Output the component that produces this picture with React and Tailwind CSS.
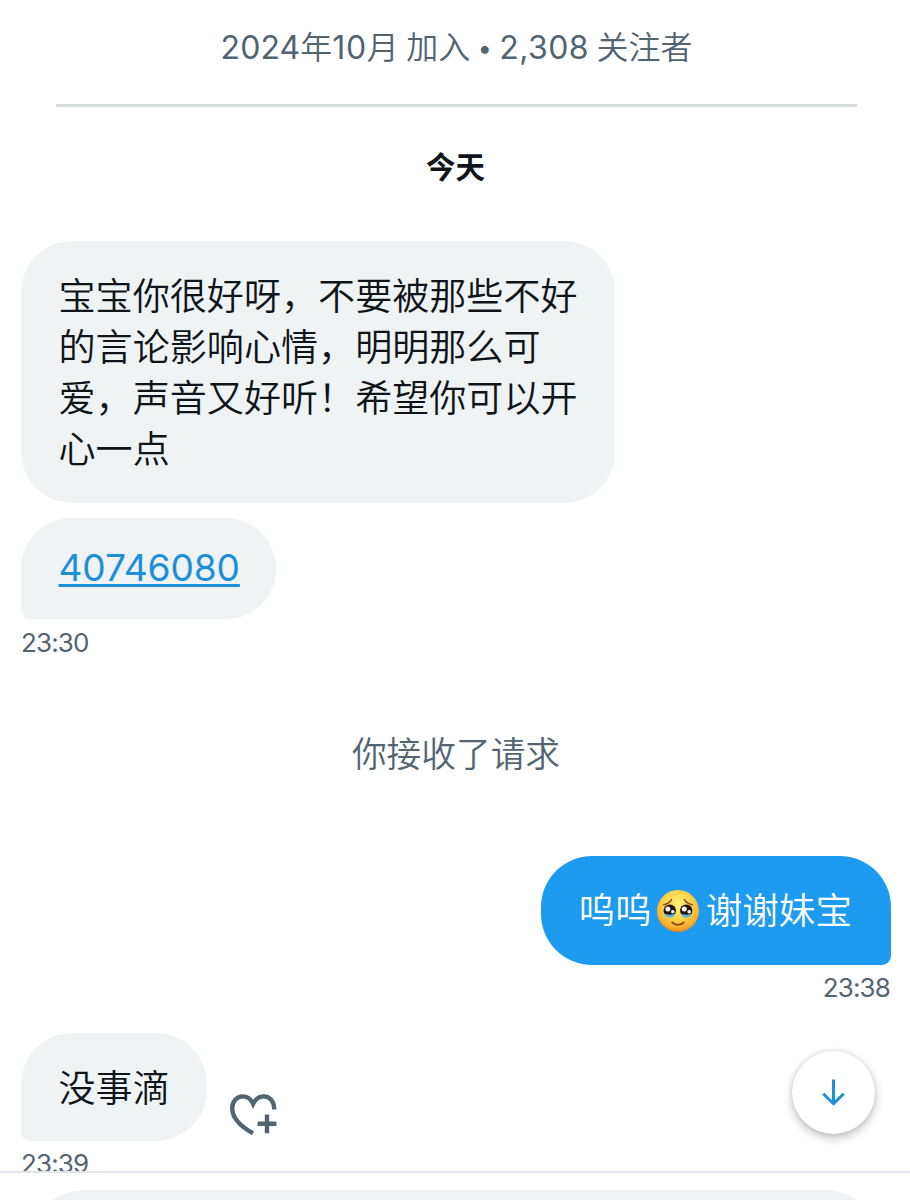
import React from "react";
import clsx from "clsx";

const messages = [
  {
    id: 1,
    lines: [
      "宝宝你很好呀，不要被那些不好",
      "的言论影响心情，明明那么可",
      "爱，声音又好听！希望你可以开",
      "心一点",
    ],
  },
  { id: 2, link: "40746080", time: "23:30" },
];

const TearyFace = () => (
  <svg viewBox="0 0 44 44" className="w-[44px] h-[44px] ml-[4px] mr-[6px] shrink-0" role="img" aria-label="🥹">
    <defs>
      <radialGradient id="face" cx="0.5" cy="0.36" r="0.66">
        <stop offset="0" stopColor="#fff07a" />
        <stop offset="0.5" stopColor="#fed54a" />
        <stop offset="0.82" stopColor="#f8ac2c" />
        <stop offset="1" stopColor="#dd7d1c" />
      </radialGradient>
    </defs>
    <circle cx="22" cy="22" r="21" fill="url(#face)" />
    <path d="M7.8 15.8C10.8 15.1 13.9 13.3 15.5 10.6" fill="none" stroke="#8a4a12" strokeWidth="1.5" strokeLinecap="round" />
    <path d="M36.2 15.8C33.2 15.1 30.1 13.3 28.5 10.6" fill="none" stroke="#8a4a12" strokeWidth="1.5" strokeLinecap="round" />
    <circle cx="13.8" cy="21.6" r="6.2" fill="#22130f" />
    <circle cx="30.2" cy="21.6" r="6.2" fill="#22130f" />
    <path d="M8.2 24.6c2.6 1.4 8.6 1.4 11.2 0-.8 2.6-3 4.1-5.6 4.1s-4.8-1.5-5.6-4.1z" fill="#58b4dd" />
    <path d="M24.6 24.6c2.6 1.4 8.6 1.4 11.2 0-.8 2.6-3 4.1-5.6 4.1s-4.8-1.5-5.6-4.1z" fill="#58b4dd" />
    <circle cx="11.9" cy="19.9" r="2.5" fill="#fff" />
    <circle cx="28.3" cy="19.9" r="2.5" fill="#fff" />
    <circle cx="16.8" cy="22.8" r="1.8" fill="#fff" />
    <circle cx="33.2" cy="22.8" r="1.8" fill="#fff" />
    <path d="M16.2 33.4c3 3.2 8.6 3.2 11.6 0" fill="none" stroke="#8a4a12" strokeWidth="1.8" strokeLinecap="round" />
  </svg>
);

const HeartPlus = () => (
  <svg viewBox="0 0 47 43" className="w-[47px] h-[43px]" fill="none" stroke="#536471" strokeWidth="4.4">
    <path d="M23 39.2C11 32.6 2.2 24 2.2 14.2 2.2 7.5 6.8 2.4 12.8 2.4c4.5 0 8 2.4 10.3 7.4 2.5-5 6-7.4 10.6-7.4 6 0 10.6 5 10.6 13.2" />
    <path d="M37 20.4v18.8M27.6 29.8h18.8" />
  </svg>
);

const Bubble = ({ tail, className, children }) => (
  <div
    className={clsx(
      "px-[37.5px] text-[37.1px] leading-[51px] whitespace-nowrap",
      tail === "left" && "rounded-[51px] rounded-bl-[9px] bg-[#eff3f4]",
      tail === "right" && "rounded-[51px] rounded-br-[9px] bg-[#1d9bf0] text-white",
      !tail && "rounded-[51px] bg-[#eff3f4]",
      className
    )}
  >
    {children}
  </div>
);

const Time = ({ className, children }) => (
  <div className={clsx("text-[26px] leading-[32px] tracking-[-0.85px] font-normal text-[#536471]", className)}>{children}</div>
);

const App = () => {
  const [first, second] = messages;

  return (
    <div className="relative flex flex-col w-[910px] h-[1200px] overflow-hidden bg-white text-[#0f1419] font-['Inter','Noto_Sans_CJK_SC',sans-serif] font-[350]">
      <main className="flex flex-col h-[1171px] shrink-0 overflow-hidden">
        <header className="ml-[56px] mr-[53px] h-[107px] shrink-0 border-b-[3px] border-[#d6dde0] pt-[24px] text-center text-[32px] leading-[48px] [word-spacing:-1.5px] text-[#536471] whitespace-nowrap">
          <span className="font-normal tracking-[0.1px]">2024</span>年<span className="font-normal tracking-[0.6px]">10</span>月 加入{" "}
          <span className="font-normal text-[25px] align-[2px]">•</span>{" "}
          <span className="font-normal tracking-[0.4px]">2,308</span> 关注者
        </header>

        <h2 className="mt-[40px] pl-[1px] h-[40px] shrink-0 text-center text-[29.5px] leading-[40px] font-bold">今天</h2>

        <section className="mt-[54px] pl-[21px] shrink-0">
          <Bubble className="w-[594px] h-[262px] pt-[30px]">
            {first.lines.map((line) => (
              <p key={line}>{line}</p>
            ))}
          </Bubble>
          <Bubble tail="left" className="mt-[15px] w-[255px] h-[101px] pt-[24px]">
            <a href="#" className="font-normal text-[#1d8fd8] underline decoration-[3px] underline-offset-[3px] tracking-[-0.1px]">
              {second.link}
            </a>
          </Bubble>
          <Time className="mt-[8px]">{second.time}</Time>
        </section>

        <p className="mt-[70px] pl-[2px] h-[50px] shrink-0 text-center text-[34.7px] leading-[50px] text-[#536471]">你接收了请求</p>

        <section className="mt-[77px] pr-[19px] flex flex-col items-end shrink-0">
          <Bubble tail="right" className="flex items-center w-[350px] h-[109px] pt-[1px]">
            <span className="text-[36.6px]">呜呜</span>
            <TearyFace />
            <span className="text-[36.6px]">谢谢妹宝</span>
          </Bubble>
          <Time className="mt-[7px] mr-[1px]">23:38</Time>
        </section>

        <section className="mt-[29px] pl-[21px] shrink-0">
          <div className="flex items-end gap-[23px]">
            <Bubble tail="left" className="w-[186px] h-[108px] pt-[30px]">没事滴</Bubble>
            <button className="mb-[4px]" aria-label="心">
              <HeartPlus />
            </button>
          </div>
          <Time className="mt-[7px]">23:39</Time>
        </section>
      </main>

      <button className="absolute left-[792px] top-[1051px] flex items-center justify-center w-[83px] h-[83px] rounded-full bg-white shadow-[0_4px_10px_rgba(0,0,0,0.24),0_0_5px_rgba(0,0,0,0.1)]">
        <svg viewBox="0 0 24 28" className="w-[24px] h-[28px]" fill="none" stroke="#1d8fdc" strokeWidth="3">
          <path d="M11.5 .5v24.5M1.3 14.7 11.5 24.7l10.2-10" />
        </svg>
      </button>

      <footer className="shrink-0 h-[29px] border-t-2 border-[#e1e5e8] px-[23px] pt-[17px] overflow-hidden">
        <div className="h-[128px] rounded-[64px] bg-[#eff3f4]" />
      </footer>
    </div>
  );
};

export default App;
